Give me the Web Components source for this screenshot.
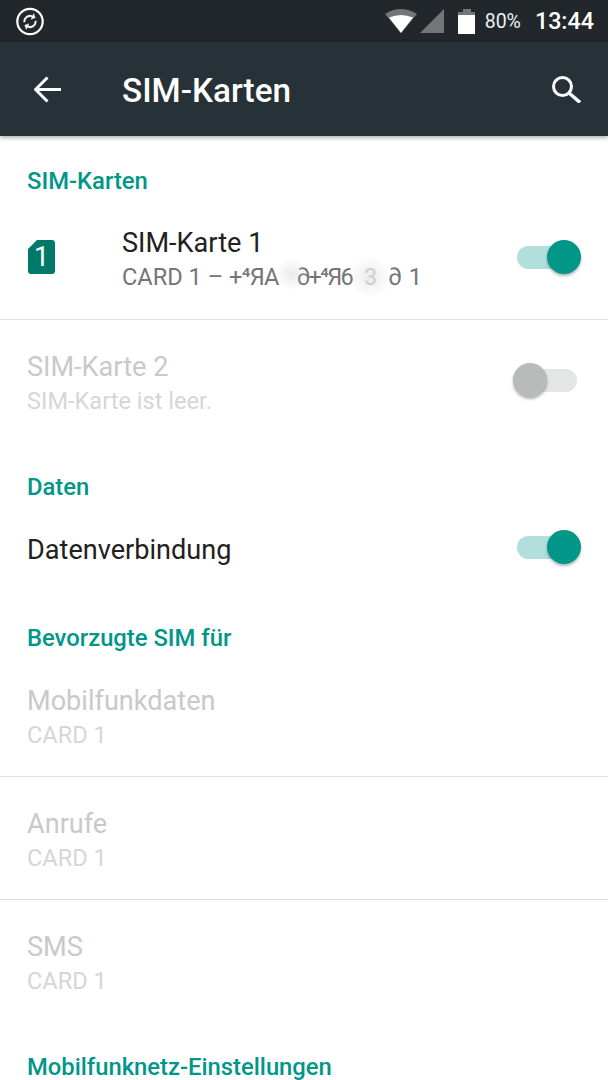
<!DOCTYPE html>
<html><head><meta charset="utf-8"><style>
html,body{margin:0;padding:0;background:#fff;height:1080px;overflow:hidden;font-family:Roboto,sans-serif}
</style></head><body>
<template id="status-t"><style>
:host{display:flex;height:42px;background:#21272b;align-items:center;color:#fff;padding:0 14px 0 16px;box-sizing:border-box}
.l{flex:1;display:flex}
.r{display:flex;align-items:center}
svg{display:block}
.pct{font-size:19.500px;margin-left:10px;color:#eceff1}
.time{font-size:23.300px;font-weight:500;margin-left:14px}
</style><div class="l"><svg width="29" height="29" viewBox="0 0 29 29"><circle cx="14" cy="14.500" r="12.700" fill="none" stroke="#fff" stroke-width="2.200"/><g transform="translate(14 14.500) rotate(25) scale(.8) translate(-12 -12)"><path fill="#fff" stroke="#fff" stroke-width=".4" d="M12 6v3l4-4-4-4v3c-4.420 0-8 3.580-8 8 0 1.570.46 3.030 1.240 4.260L6.700 14.800c-.45-.83-.7-1.790-.7-2.800 0-3.310 2.690-6 6-6zm6.760 1.740L17.300 9.200c.44.840.7 1.790.7 2.800 0 3.310-2.690 6-6 6v-3l-4 4 4 4v-3c4.420 0 8-3.580 8-8 0-1.570-.46-3.030-1.240-4.260z"/></g></svg></div>
<div class="r"><svg width="32" height="24" viewBox="0 0 32 24"><path d="M0 5 Q16 -5 32 5 L16 24z" fill="#737577"/><path d="M4 8.500 Q16 3.500 28 8.500 L16 24z" fill="#fff"/></svg>
<svg width="24" height="24" viewBox="0 0 24 24" style="margin-left:3px"><path d="M24 0V24H0z" fill="#737577"/></svg>
<svg width="17" height="25" viewBox="0 0 17 25" style="margin-left:14px"><path d="M5 0h8v3h4v4H0V3h5z" fill="#737577"/><path d="M0 6h17v19H0z" fill="#fff"/></svg>
<span class="pct">80%</span><span class="time">13:44</span></div></template>

<template id="bar-t"><style>
:host{display:flex;height:94px;background:#263238;align-items:center;color:#fff;box-shadow:0 2px 4px rgba(0,0,0,.3);position:relative;z-index:1}
.back{width:122px;display:flex;padding-left:34px;box-sizing:border-box}
.t{flex:1;font-size:33.300px;font-weight:500;padding-top:3px}
svg{display:block}
.s{margin-right:27px}
</style><div class="back"><svg width="27" height="27" viewBox="0 0 27 27"><path d="M1.500 13.500H27M13.500 1.500 1.500 13.500 13.500 25.500" fill="none" stroke="#fff" stroke-width="3"/></svg></div><div class="t"><slot></slot></div>
<svg class="s" width="29" height="27" viewBox="0 0 29 27"><circle cx="10.500" cy="10.500" r="9" fill="none" stroke="#fff" stroke-width="3"/><path d="M17 17 28 26.500" stroke="#fff" stroke-width="3.400" fill="none"/></svg></template>

<template id="head-t"><style>
:host{display:block;color:#009688;font-size:23.800px;font-weight:500;padding:0 27px;line-height:29px;margin-bottom:-1px}
</style><slot></slot></template>

<template id="row-t"><style>
:host{display:flex;align-items:center;box-sizing:border-box;padding:0 27px;position:relative}
.m{flex:1;min-width:0;padding-top:var(--text-shift,4px)}
.t{font-size:27.100px;line-height:34px;color:#212121}
.s{font-size:23.600px;line-height:34px;color:#757575;white-space:pre}
:host([disabled]) .t{color:#c9c9c9}
:host([disabled]) .s{color:#d6d6d6}
::slotted([slot=icon]){width:95px;flex:none}
::slotted([slot=end]){margin-right:4px}
</style><slot name="icon"></slot><div class="m"><div class="t"><slot name="title"></slot></div><div class="s"><slot name="sub"></slot></div></div><slot name="end"></slot></template>

<template id="sw-t"><style>
:host{display:block;width:60px;height:34px;position:relative;flex:none}
.track{position:absolute;left:0;top:5.500px;width:60px;height:23px;border-radius:12px;background:#b2dfdb}
.knob{position:absolute;right:-4px;top:0;width:34px;height:34px;border-radius:50%;background:#009688;box-shadow:0 2px 3px rgba(0,0,0,.3)}
:host([off]) .track{background:#e4e6e6}
:host([off]) .knob{right:auto;left:-4px;background:#b9baba}
</style><div class="track"></div><div class="knob"></div></template>

<template id="sim-t"><style>
:host{display:block}
.i{position:relative;width:27px;height:34px;margin-left:1px}
svg{display:block}
span{position:absolute;inset:0;text-align:center;color:#fff;font-size:27px;line-height:35px}
</style><div class="i"><svg width="27" height="34" viewBox="0 0 27 34"><path d="M9 0H24a3 3 0 0 1 3 3V31a3 3 0 0 1-3 3H3a3 3 0 0 1-3-3V9z" fill="#00796b"/></svg><span><slot></slot></span></div></template>

<template id="page-t"><style>
:host{display:block}
</style><slot></slot></template>

<template id="mask-t"><style>
:host{display:inline-block;position:relative;white-space:pre}
i{position:absolute;border-radius:50%;background:radial-gradient(circle,rgba(205,205,205,.4),rgba(255,255,255,0) 70%);pointer-events:none}
.a{left:-22px;top:-3px;width:34px;height:34px}
.b{left:50px;top:-3px;width:46px;height:40px}
</style><slot></slot><i class="a"></i><i class="b"></i></template>

<script>
function def(n,t){customElements.define(n,class extends HTMLElement{constructor(){super();this.attachShadow({mode:'open'}).appendChild(document.getElementById(t).content.cloneNode(true));}});}
def('status-bar','status-t');def('app-bar','bar-t');def('sec-head','head-t');def('set-row','row-t');def('tog-sw','sw-t');def('sim-icon','sim-t');def('set-list','page-t');def('num-mask','mask-t');
</script>
<status-bar></status-bar>
<app-bar>SIM-Karten</app-bar>
<set-list>
<sec-head style="margin-top:31px">SIM-Karten</sec-head>
<set-row style="height:125px;border-bottom:1px solid #e0e0e0;--text-shift:6px"><sim-icon slot="icon">1</sim-icon><span slot="title">SIM-Karte 1</span><span slot="sub">CARD 1 – <span style="letter-spacing:-.7px">+⁴ЯA</span><num-mask style="margin-left:18px"><span style="letter-spacing:-1.700px">∂+⁴Я6</span><span style="opacity:.35;margin-left:12px">3</span><span style="margin-left:11px">∂</span><span style="margin-left:7px">1</span></num-mask></span><tog-sw slot="end"></tog-sw></set-row>
<set-row disabled style="height:123px;--text-shift:5px"><span slot="title">SIM-Karte 2</span><span slot="sub">SIM-Karte ist leer.</span><tog-sw slot="end" off style="margin-top:-3px"></tog-sw></set-row>
<sec-head style="margin-top:30px">Daten</sec-head>
<set-row style="height:96px;--text-shift:2px"><span slot="title">Datenverbindung</span><tog-sw slot="end" style="margin-top:-4px"></tog-sw></set-row>
<sec-head style="margin-top:27px">Bevorzugte SIM für</sec-head>
<set-row disabled style="height:125px;border-bottom:1px solid #e0e0e0;--text-shift:8px"><span slot="title">Mobilfunkdaten</span><span slot="sub">CARD 1</span></set-row>
<set-row disabled style="height:123px;border-bottom:1px solid #e0e0e0;--text-shift:6px"><span slot="title">Anrufe</span><span slot="sub">CARD 1</span></set-row>
<set-row disabled style="height:123px;--text-shift:5px"><span slot="title">SMS</span><span slot="sub">CARD 1</span></set-row>
<sec-head style="margin-top:30px">Mobilfunknetz-Einstellungen</sec-head>
</set-list>
</body></html>
